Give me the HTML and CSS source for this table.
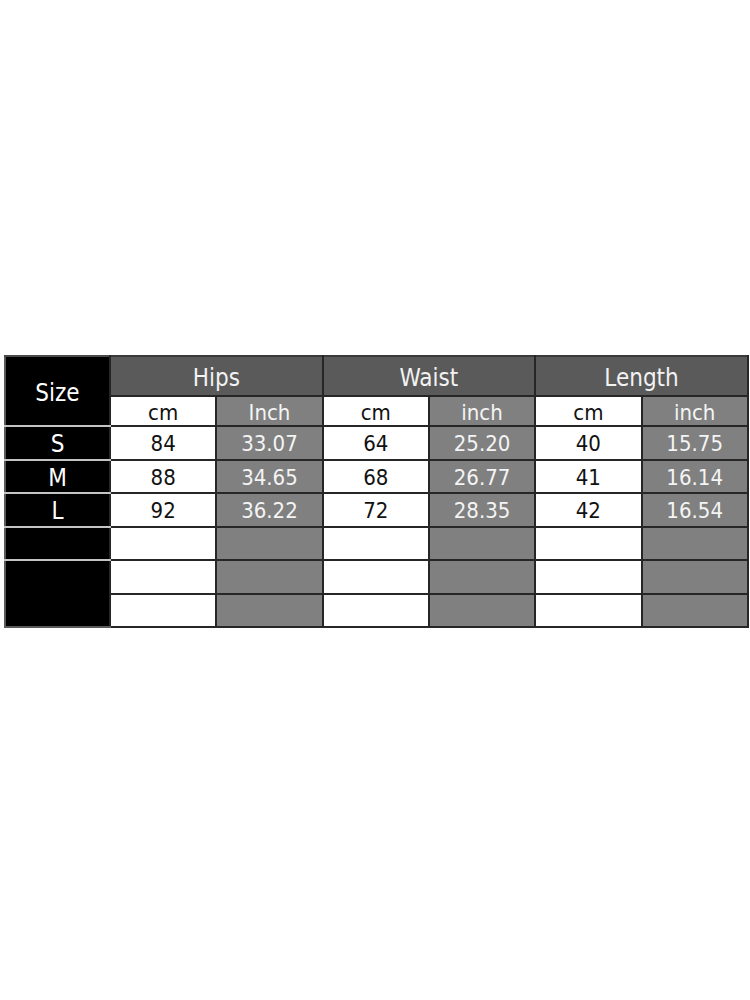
FILE: index.html
```html
<!DOCTYPE html>
<html>
<head>
<meta charset="utf-8">
<link rel="stylesheet" href="styles.css">
</head>
<body>
<div class="page">
  <table class="size-table">
    <colgroup>
      <col class="c-size">
      <col class="c-val"><col class="c-val">
      <col class="c-val"><col class="c-val">
      <col class="c-val"><col class="c-val">
    </colgroup>
    <tr class="r-head">
      <th class="size-cell head-size" rowspan="2">Size</th>
      <th class="group" colspan="2">Hips</th>
      <th class="group" colspan="2">Waist</th>
      <th class="group" colspan="2">Length</th>
    </tr>
    <tr class="r-sub">
      <td class="w">cm</td><td class="g">Inch</td>
      <td class="w">cm</td><td class="g">inch</td>
      <td class="w">cm</td><td class="g">inch</td>
    </tr>
    <tr class="r-data">
      <td class="size-cell">S</td>
      <td class="w">84</td><td class="g">33.07</td>
      <td class="w">64</td><td class="g">25.20</td>
      <td class="w">40</td><td class="g">15.75</td>
    </tr>
    <tr class="r-data">
      <td class="size-cell">M</td>
      <td class="w">88</td><td class="g">34.65</td>
      <td class="w">68</td><td class="g">26.77</td>
      <td class="w">41</td><td class="g">16.14</td>
    </tr>
    <tr class="r-data">
      <td class="size-cell">L</td>
      <td class="w">92</td><td class="g">36.22</td>
      <td class="w">72</td><td class="g">28.35</td>
      <td class="w">42</td><td class="g">16.54</td>
    </tr>
    <tr class="r-data">
      <td class="size-cell"></td>
      <td class="w"></td><td class="g"></td>
      <td class="w"></td><td class="g"></td>
      <td class="w"></td><td class="g"></td>
    </tr>
    <tr class="r-data">
      <td class="size-cell size-last" rowspan="2"></td>
      <td class="w"></td><td class="g"></td>
      <td class="w"></td><td class="g"></td>
      <td class="w"></td><td class="g"></td>
    </tr>
    <tr class="r-data">
      <td class="w"></td><td class="g"></td>
      <td class="w"></td><td class="g"></td>
      <td class="w"></td><td class="g"></td>
    </tr>
  </table>
</div>
</body>
</html>
```

FILE: styles.css
```css
html, body {
  margin: 0;
  padding: 0;
  background: #ffffff;
}

.page {
  width: 750px;
  height: 1000px;
  overflow: hidden;
  padding-top: 355px;
  padding-left: 4px;
  box-sizing: border-box;
}

.size-table {
  border-collapse: collapse;
  table-layout: fixed;
  width: 743px;
  font-family: "DejaVu Sans Condensed", "DejaVu Sans", sans-serif;
  font-size: 22px;
  color: #111111;
  border: 2px solid #4a4a4a;
}

.c-size { width: 105px; }
.c-val { width: 106.3px; }

.size-table th,
.size-table td {
  border: 2px solid #262626;
  padding: 3px 0 0 0;
  text-align: center;
  vertical-align: middle;
  font-weight: normal;
  line-height: 1;
}

.r-head { height: 40px; }
.r-sub { height: 30px; }
.r-data { height: 33.5px; }

.size-cell {
  background: #000000;
  color: #ffffff;
  font-size: 24px;
  border-bottom: 2px solid #c4c4c4 !important;
  border-left: 2px solid #5a5a5a !important;
}

.size-cell.size-last {
  border-bottom: 2px solid #5a5a5a !important;
}

.head-size {
  border-top: 2px solid #4a4a4a !important;
}

.group {
  background: #5a5a5a;
  color: #f2f2f2;
  font-size: 24px;
  border-top: 2px solid #3a3a3a !important;
}

.w {
  background: #ffffff;
  color: #111111;
}

.g {
  background: #808080;
  color: #f4f4f4;
}
```
